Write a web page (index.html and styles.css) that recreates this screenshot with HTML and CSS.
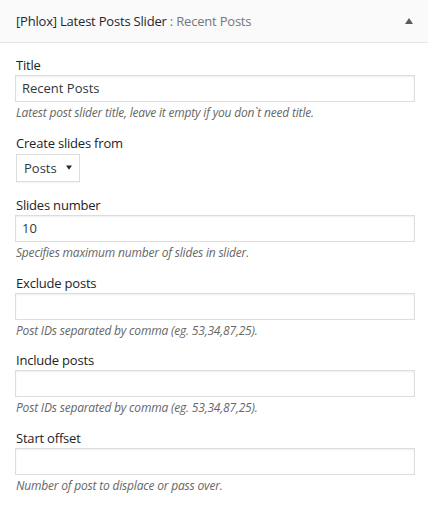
FILE: index.html
```html
<!DOCTYPE html>
<html>
<head>
<meta charset="utf-8">
<link rel="stylesheet" href="styles.css">
</head>
<body>
<div class="widget">
  <div class="widget-top">
    <h3 class="widget-title">[Phlox] Latest Posts Slider <span class="in-title">: Recent Posts</span></h3>
    <svg class="toggle" width="10" height="8" viewBox="0 0 10 8"><path d="M1 7 L5 1 L9 7 Z" fill="#555d66"/></svg>
  </div>
  <div class="widget-inside">
    <div class="field">
      <label class="label">Title</label>
      <div class="input">Recent Posts</div>
      <p class="desc">Latest post slider title, leave it empty if you don`t need title.</p>
    </div>
    <div class="field field-select">
      <label class="label">Create slides from</label>
      <div class="select"><span>Posts</span><svg class="arrow" width="6" height="5" viewBox="0 0 6 5"><path d="M0 0.5 L6 0.5 L3 4.8 Z" fill="#23282d"/></svg></div>
    </div>
    <div class="field">
      <label class="label">Slides number</label>
      <div class="input">10</div>
      <p class="desc">Specifies maximum number of slides in slider.</p>
    </div>
    <div class="field">
      <label class="label">Exclude posts</label>
      <div class="input"></div>
      <p class="desc">Post IDs separated by comma (eg. 53,34,87,25).</p>
    </div>
    <div class="field">
      <label class="label">Include posts</label>
      <div class="input"></div>
      <p class="desc">Post IDs separated by comma (eg. 53,34,87,25).</p>
    </div>
    <div class="field">
      <label class="label">Start offset</label>
      <div class="input"></div>
      <p class="desc">Number of post to displace or pass over.</p>
    </div>
  </div>
</div>
</body>
</html>
```

FILE: styles.css
```css
html, body {
  margin: 0;
  padding: 0;
  background: #fff;
}
body {
  font-family: "Open Sans", "Noto Sans", sans-serif;
  color: #23282d;
}
.widget-top {
  height: 42px;
  background: #fafafa;
  border-bottom: 1px solid #e5e5e5;
  display: flex;
  align-items: center;
  justify-content: space-between;
  padding: 0 14px 0 16px;
}
.widget-title {
  margin: 0;
  font-size: 13px;
  font-weight: 400;
  letter-spacing: -0.2px;
  color: #23282d;
  line-height: 20px;
}
.in-title {
  color: #72777c;
}
.toggle {
  display: block;
}
.widget-inside {
  padding: 12px 13px 0 15px;
}
.field {
  margin-bottom: 9.67px;
}
.label {
  display: block;
  font-size: 13px;
  letter-spacing: -0.2px;
  line-height: 20px;
  color: #1d2327;
  padding-left: 1px;
}
.input {
  box-sizing: border-box;
  height: 27px;
  border: 1px solid #ddd;
  box-shadow: inset 0 1px 2px rgba(0,0,0,0.07);
  font-size: 13px;
  line-height: 25px;
  padding: 0 6px;
  color: #32373c;
}
.desc {
  margin: 1px 0 0;
  font-size: 12px;
  letter-spacing: -0.19px;
  line-height: 20px;
  font-style: italic;
  color: #666;
  padding-left: 1px;
}
.field-select {
  margin-bottom: 13px;
}
.select {
  margin-top: 1.33px;
  margin-left: 1px;
  box-sizing: border-box;
  width: 64px;
  height: 28px;
  border: 1px solid #ddd;
  box-shadow: 0 1px 1px rgba(0,0,0,0.04);
  display: flex;
  align-items: center;
  padding: 0 7px 0 7px;
  justify-content: space-between;
  font-size: 13px;
  color: #32373c;
}
.arrow {
  display: block;
}
```
